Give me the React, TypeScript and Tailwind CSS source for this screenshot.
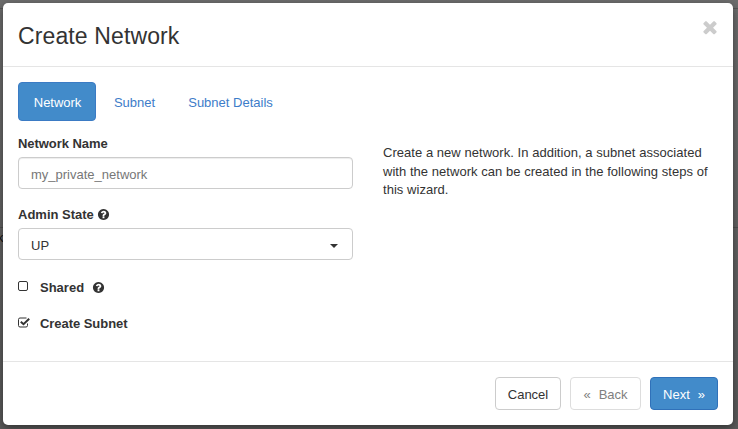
import type { ReactNode } from "react";

const TIMES =
  "M1490 1322q0 40-28 68l-136 136q-28 28-68 28t-68-28l-294-294-294 294q-28 28-68 28t-68-28l-136-136q-28-28-28-68t28-68l294-294-294-294q-28-28-28-68t28-68l136-136q28-28 68-28t68 28l294 294 294-294q28-28 68-28t68 28l136 136q28 28 28 68t-28 68l-294 294 294 294q28 28 28 68z";
const HELP =
  "M1024 1376v-192q0-14-9-23t-23-9h-192q-14 0-23 9t-9 23v192q0 14 9 23t23 9h192q14 0 23-9t9-23zm256-672q0-88-55.5-163t-138.5-116-170-41q-243 0-371 213-15 24 8 42l132 100q7 6 19 6 16 0 25-12 53-68 86-92 34-24 86-24 48 0 85.5 26t37.5 59q0 38-20 61t-68 45q-63 28-115.5 86.5t-52.5 125.5v36q0 14 9 23t23 9h192q14 0 23-9t9-23q0-19 21.5-49.5t54.5-49.5q32-18 49-28.5t46-35 44.5-48 28-60.5 12.5-81zm384 192q0 209-103 385.5t-279.5 279.5-385.5 103-385.5-103-279.5-279.5-103-385.5 103-385.5 279.5-279.5 385.5-103 385.5 103 279.5 279.5 103 385.5z";

function Glyph({ d, className }: { d: string; className: string }) {
  return (
    <svg viewBox="0 0 1792 1792" fill="currentColor" className={className} aria-hidden="true">
      <path d={d} />
    </svg>
  );
}

function CheckedBox() {
  return (
    <svg viewBox="0 0 12 11" fill="none" stroke="currentColor" className="mb-[3px] mr-[10px] h-[11px] w-3" aria-hidden="true">
      <path d="M9.5 6.5V8.5a1.5 1.5 0 0 1-1.5 1.5H2a1.5 1.5 0 0 1-1.5-1.5V2.500A1.5 1.5 0 0 1 2 1H8.500" />
      <path d="M2.800 4.700L5.500 7.200L11.200 1.700" strokeWidth="2" />
    </svg>
  );
}

function Label({ children }: { children: ReactNode }) {
  return <div className="flex h-[18px] items-center text-[13px] font-bold leading-[18px]">{children}</div>;
}

export default function App() {
  return (
    <div className="relative h-[429px] w-[738px] overflow-hidden bg-gradient-to-b from-[#6d6d6d] to-[#5a5a5a] px-[3px] pt-[3px] font-['Liberation_Sans',Arial,sans-serif] text-[13px] text-[#333]">
      <div className="absolute left-0 top-[8px] h-px w-full bg-[#575757]" />
      <div className="absolute left-0 top-[227px] h-px w-full bg-[#505050]" />
      <span className="absolute left-[-3px] top-[229px] leading-[18px] text-[#111]">k</span>

      <div className="relative flex h-[422px] w-[730px] flex-col rounded-[5px] bg-white shadow-[0_3px_8px_rgba(0,0,0,0.45)]">
        <header className="flex h-16 items-start justify-between border-b border-[#e5e5e5] px-[15px]">
          <h1 className="pt-[17px] text-[23px] leading-[32px] tracking-[0.12px]">Create Network</h1>
          <button className="mt-[14px] text-[#ccc]">
            <Glyph d={TIMES} className="-mr-[2px] h-5 w-5" />
          </button>
        </header>

        <main className="h-[294px] px-[15px] pt-[15px]">
          <nav className="flex h-[39px] text-[#3d7cc9]">
            <button className="w-[78px] rounded-[4px] border border-[#3b7bc4] bg-[#428bca] pl-px pt-[2px] tracking-[-0.05px] text-white">Network</button>
            <button className="ml-[2px] w-[73px] pt-[2px]">Subnet</button>
            <button className="ml-[2px] w-[115px] pt-[2px]">Subnet Details</button>
          </nav>
          <div className="flex gap-[30px]">
            <form className="w-[335px] pt-[14px]">
              <Label>
                <span className="tracking-[-0.05px]">Network Name</span>
              </Label>
              <input
                defaultValue="my_private_network"
                className="mt-[4px] block h-8 w-full rounded-[4px] border border-[#ccc] px-3 pt-[2px] text-[13px] text-[#777] shadow-[inset_0_1px_1px_rgba(0,0,0,0.075)] outline-none"
              />
              <div className="mt-[17px]">
                <Label>
                  Admin State
                  <Glyph d={HELP} className="mb-px ml-[3px] h-[13px] w-[13px]" />
                </Label>
              </div>
              <div className="mt-[4px] flex h-8 items-center justify-between rounded-[4px] border border-[#ccc] pl-3 pr-[14px]">
                <span className="pt-[3px]">UP</span>
                <span className="mt-[3px] h-0 w-0 border-x-[4.5px] border-t-[4.5px] border-x-transparent border-t-[#333]" />
              </div>
              <div className="mt-[19px]">
                <Label>
                  <span className="mb-[4px] mr-[12px] h-[10px] w-[10px] rounded-[2px] border border-[#333]" />
                  Shared
                  <Glyph d={HELP} className="mb-px ml-[8px] h-[13px] w-[13px]" />
                </Label>
              </div>
              <div className="mt-[18px]">
                <Label>
                  <CheckedBox />
                  <span className="tracking-[-0.05px]">Create Subnet</span>
                </Label>
              </div>
            </form>
            <p className="w-[335px] pt-[23px] leading-[18.5px] tracking-[0.04px]">
              Create a new network. In addition, a subnet associated with the network can be created in the following steps of this wizard.
            </p>
          </div>
        </main>

        <footer className="flex justify-end border-t border-[#e5e5e5] px-[15px] pt-[15px]">
          <button className="h-[33px] w-[66px] rounded-[4px] border border-[#ccc] pt-[2px]">Cancel</button>
          <button className="ml-[9px] h-[33px] w-[71px] rounded-[4px] border border-[#ddd] pt-[2px] text-[#808080]">
            «<span className="ml-[8px]">Back</span>
          </button>
          <button className="ml-[9px] h-[33px] w-[68px] rounded-[4px] border border-[#3071b9] bg-[#428bca] pt-[2px] text-white">
            Next<span className="ml-[8px]">»</span>
          </button>
        </footer>
      </div>
    </div>
  );
}
